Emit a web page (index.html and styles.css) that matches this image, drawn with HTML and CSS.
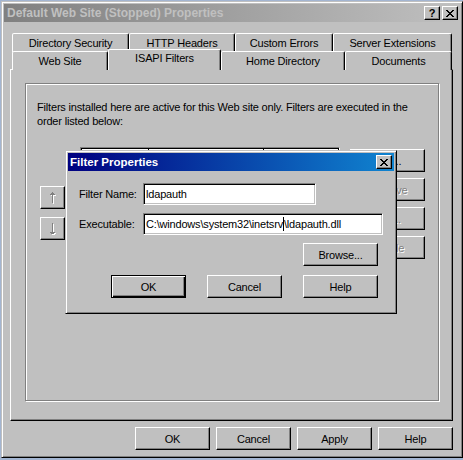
FILE: index.html
```html
<!DOCTYPE html>
<html>
<head>
<meta charset="utf-8">
<link rel="stylesheet" href="styles.css">
</head>
<body>
<div class="window">
  <div class="titlebar inactive">
    <span class="title">Default Web Site (Stopped) Properties</span>
    <div class="tbtns">
      <span class="tbtn help">?</span>
      <span class="tbtn"><svg width="8" height="7" viewBox="0 0 8 7" shape-rendering="crispEdges"><path fill="#000" d="M0 0h2v1H0z M6 0h2v1H6z M1 1h2v1H1z M5 1h2v1H5z M2 2h4v1H2z M3 3h2v1H3z M2 4h4v1H2z M1 5h2v1H1z M5 5h2v1H5z M0 6h2v1H0z M6 6h2v1H6z"/></svg></span>
    </div>
  </div>
  <div class="client">
    <div class="tabs">
      <div class="tabrow">
        <div class="tab w117">Directory Security</div>
        <div class="tab w106">HTTP Headers</div>
        <div class="tab w98">Custom Errors</div>
        <div class="tab w119">Server Extensions</div>
      </div>
      <div class="tabrow">
        <div class="tab w96">Web Site</div>
        <div class="tab sel w113">ISAPI Filters</div>
        <div class="tab w124">Home Directory</div>
        <div class="tab w107">Documents</div>
      </div>
    </div>
    <div class="panel">
      <div class="group">
        <p class="intro">Filters installed here are active for this Web site only. Filters are executed in the order listed below:</p>
        <div class="filters">
          <div class="arrows">
            <div class="btn arrow"><svg width="8" height="12" viewBox="0 0 8 12" shape-rendering="crispEdges"><path fill="#fff" d="M4 1h1v11H4z M3 2h3v1H3z M2 3h5v1H2z"/><path fill="#808080" d="M3 0h1v11H3z M2 1h3v1H2z M1 2h5v1H1z"/></svg></div>
            <div class="btn arrow"><svg width="8" height="12" viewBox="0 0 8 12" shape-rendering="crispEdges"><path fill="#fff" d="M4 1h1v11H4z M3 11h3v1H3z M2 10h5v1H2z"/><path fill="#808080" d="M3 0h1v11H3z M2 10h3v1H2z M1 9h5v1H1z"/></svg></div>
          </div>
          <div class="list">
            <div class="lhead">
              <div class="col c1"></div>
              <div class="col c2"></div>
              <div class="col c3"></div>
            </div>
          </div>
          <div class="side">
            <div class="btn">Add...</div>
            <div class="btn disabled">Remove</div>
            <div class="btn disabled">Edit...</div>
            <div class="btn disabled">Enable</div>
          </div>
        </div>
      </div>
    </div>
    <div class="footer">
      <div class="btn">OK</div>
      <div class="btn">Cancel</div>
      <div class="btn">Apply</div>
      <div class="btn">Help</div>
    </div>
  </div>

  <div class="dialog">
    <div class="titlebar active">
      <span class="title dtitle">Filter Properties</span>
      <div class="tbtns">
        <span class="tbtn"><svg width="8" height="7" viewBox="0 0 8 7" shape-rendering="crispEdges"><path fill="#000" d="M0 0h2v1H0z M6 0h2v1H6z M1 1h2v1H1z M5 1h2v1H5z M2 2h4v1H2z M3 3h2v1H3z M2 4h4v1H2z M1 5h2v1H1z M5 5h2v1H5z M0 6h2v1H0z M6 6h2v1H6z"/></svg></span>
      </div>
    </div>
    <div class="dbody">
      <div class="frow">
        <label class="flabel">Filter Name:</label>
        <div class="field f1">ldapauth</div>
      </div>
      <div class="frow">
        <label class="flabel">Executable:</label>
        <div class="field f2">C:\windows\system32\inetsrv<span class="caret"></span>\ldapauth.dll</div>
      </div>
      <div class="browse-row">
        <div class="btn">Browse...</div>
      </div>
      <div class="dbtns">
        <div class="btn default">OK</div>
        <div class="btn">Cancel</div>
        <div class="btn">Help</div>
      </div>
    </div>
  </div>
</div>
</body>
</html>
```

FILE: styles.css
```css
html, body {
  margin: 0;
  padding: 0;
}
body {
  background: #a3b5d1;
  width: 463px;
  height: 460px;
  overflow: hidden;
  font-family: "Liberation Sans", Arial, sans-serif;
  font-size: 11px;
  letter-spacing: -0.18px;
  color: #000;
}
.window {
  position: relative;
  box-sizing: border-box;
  margin: 1px 0 0 1px;
  width: 462px;
  height: 457px;
  background: #c0c0c0;
  border: 1px solid;
  border-color: #c0c0c0 #000 #000 #c0c0c0;
  box-shadow: inset 1px 1px #fff, inset -1px -1px #808080;
  padding: 2px;
}
.titlebar {
  height: 18px;
  display: flex;
  align-items: center;
  justify-content: space-between;
  padding-left: 3px;
  padding-right: 2px;
}
.titlebar.inactive {
  background: linear-gradient(to right, #808080, #c0c0c0);
  color: #c0c0c0;
}
.titlebar.active {
  background: linear-gradient(to right, #000080, #1084d0);
  color: #fff;
  padding-left: 2px;
}
.title {
  font-weight: bold;
  font-size: 12px;
  letter-spacing: 0;
  white-space: nowrap;
}
.title.dtitle {
  font-size: 11.5px;
}
.tbtns {
  display: flex;
  gap: 2px;
}
.tbtn {
  box-sizing: border-box;
  width: 16px;
  height: 14px;
  background: #c0c0c0;
  border: 1px solid;
  border-color: #fff #000 #000 #fff;
  box-shadow: inset -1px -1px #808080;
  display: flex;
  align-items: center;
  justify-content: center;
  color: #000;
}
.tbtn.help {
  font-weight: bold;
  font-size: 11px;
  line-height: 12px;
  letter-spacing: 0;
}
.client {
  padding: 0 7px 0 6px;
}
.tabs {
  margin-top: 11px;
  padding-left: 2px;
}
.tabrow {
  display: flex;
  height: 18px;
}
.tab {
  box-sizing: border-box;
  height: 19px;
  flex: none;
  border: 1px solid;
  border-bottom: none;
  border-color: #fff #000 transparent #fff;
  border-radius: 2px 2px 0 0;
  box-shadow: inset -1px 0 #808080;
  background: #c0c0c0;
  text-align: center;
  line-height: 17px;
  padding-top: 1px;
  white-space: nowrap;
}
.tab.sel {
  position: relative;
  z-index: 2;
  margin-top: -2px;
  height: 21px;
  padding-top: 0;
}
.w117 { width: 117px; }
.w106 { width: 106px; }
.w98 { width: 98px; }
.w119 { width: 119px; }
.w96 { width: 96px; }
.w113 { width: 113px; }
.w124 { width: 124px; }
.w107 { width: 107px; }
.panel {
  box-sizing: border-box;
  height: 352px;
  border: 1px solid;
  border-color: #fff #000 #000 #fff;
  box-shadow: inset -1px -1px #808080;
  padding: 13px 0 0 14px;
}
.group {
  box-sizing: border-box;
  width: 414px;
  height: 318px;
  border: 1px solid #808080;
  box-shadow: 1px 1px #fff, inset 1px 1px #fff;
  padding: 16px 0 0 11px;
}
.intro {
  margin: 0;
  line-height: 14px;
  width: 390px;
}
.filters {
  display: flex;
  align-items: flex-start;
  margin-top: 19px;
}
.arrows {
  display: flex;
  flex-direction: column;
  gap: 8px;
  margin-left: 3px;
  margin-top: 39px;
}
.btn {
  box-sizing: border-box;
  width: 75px;
  height: 23px;
  flex: none;
  border: 1px solid;
  border-color: #fff #000 #000 #fff;
  box-shadow: inset -1px -1px #808080;
  background: #c0c0c0;
  display: flex;
  align-items: center;
  justify-content: center;
  white-space: nowrap;
}
.btn.arrow {
  width: 25px;
}
.btn.disabled {
  color: #808080;
  text-shadow: 1px 1px #fff;
}
.btn.default {
  border-color: #000;
  box-shadow: inset 1px 1px #fff, inset -1px -1px #000, inset -2px -2px #808080;
}
.list {
  box-sizing: border-box;
  margin-left: 15px;
  width: 260px;
  height: 150px;
  background: #fff;
  border: 1px solid;
  border-color: #808080 #fff #fff #808080;
  box-shadow: inset 1px 1px #000;
  padding: 1px 0 0 1px;
}
.lhead {
  display: flex;
  height: 17px;
}
.col {
  box-sizing: border-box;
  height: 17px;
  background: #c0c0c0;
  border-right: 1px solid #000;
  box-shadow: inset 1px 1px #fff, inset -1px -1px #808080;
}
.c1 { width: 67px; }
.c2 { width: 116px; }
.c3 { width: 75px; }
.side {
  display: flex;
  flex-direction: column;
  gap: 6px;
  margin-left: 10px;
  margin-top: 2px;
}
.footer {
  display: flex;
  justify-content: flex-end;
  gap: 6px;
  margin-top: 6px;
}
.dialog {
  position: absolute;
  left: 63px;
  top: 148px;
  z-index: 5;
  box-sizing: border-box;
  width: 332px;
  height: 164px;
  background: #c0c0c0;
  border: 1px solid;
  border-color: #c0c0c0 #000 #000 #c0c0c0;
  box-shadow: inset 1px 1px #fff, inset -1px -1px #808080;
  padding: 2px;
}
.dbody {
  padding: 12px 0 0 11px;
}
.frow {
  display: flex;
  align-items: center;
  height: 22px;
  margin-bottom: 8px;
}
.flabel {
  width: 64px;
  flex: none;
}
.field {
  box-sizing: border-box;
  height: 22px;
  border: 1px solid;
  border-color: #808080 #fff #fff #808080;
  box-shadow: inset 1px 1px #000, inset -1px -1px #c0c0c0;
  background: #fff;
  padding-left: 2px;
  display: flex;
  align-items: center;
  white-space: nowrap;
}
.f1 { width: 173px; }
.f2 { width: 240px; }
.caret {
  display: inline-block;
  width: 1px;
  height: 14px;
  background: #000;
}
.browse-row {
  display: flex;
  justify-content: flex-end;
  margin-top: 1px;
  padding-right: 16px;
}
.dbtns {
  display: flex;
  justify-content: flex-end;
  gap: 21px;
  margin-top: 9px;
  padding-right: 16px;
}
```
